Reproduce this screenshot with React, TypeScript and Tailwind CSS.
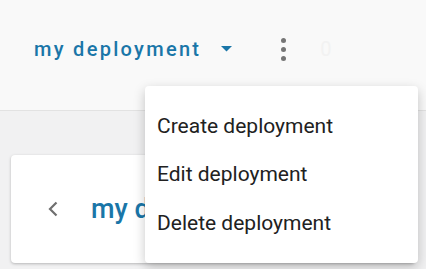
import React from 'react';

const menuItems = ['Create deployment', 'Edit deployment', 'Delete deployment'];

const App: React.FC = () => {
  return (
    <div
      className="relative w-[426px] h-[269px] overflow-hidden bg-[#f1f1f2]"
      style={{ fontFamily: 'Roboto, "Noto Sans", sans-serif' }}
    >
      {/* top bar */}
      <div className="h-[111px] bg-[#f9f9f9] border-b border-[#e2e2e2]">
        <div className="flex items-center h-[98px] pl-[34px]">
          <span className="text-[20px] font-medium tracking-[2.3px] text-[#1a76a8]">my deployment</span>
          <svg className="ml-[20px]" width="12" height="6" viewBox="0 0 12 6">
            <path d="M0 0h11L5.5 5.5z" fill="#1a76a8" />
          </svg>
          <div className="ml-[48px] flex flex-col gap-[4px]">
            <span className="w-[5px] h-[5px] rounded-full bg-[#757575]" />
            <span className="w-[5px] h-[5px] rounded-full bg-[#757575]" />
            <span className="w-[5px] h-[5px] rounded-full bg-[#757575]" />
          </div>
          <span className="ml-[34px] text-[20px] text-[#f2f2f2]">0</span>
        </div>
      </div>

      {/* card */}
      <div className="mx-[11px] mt-[44px] h-[108px] bg-white rounded-[4px] shadow-[0_1px_3px_rgba(0,0,0,0.25)] flex items-center pl-[35px]">
        <svg width="14" height="18" viewBox="0 0 14 18">
          <path d="M10.5 2.5L4 9l6.5 6.5" fill="none" stroke="#6f6f6f" strokeWidth="2.2" />
        </svg>
        <span className="ml-[31px] text-[27px] font-medium text-[#1a76a8]">my deployment</span>
      </div>

      {/* dropdown menu */}
      <div className="absolute left-[145px] top-[86px] w-[273px] h-[177px] bg-white rounded-[4px] shadow-[0_4px_12px_rgba(0,0,0,0.22)] pt-[16px]">
        {menuItems.map((item) => (
          <div key={item} className="h-[48.5px] flex items-center pl-[12px] text-[21px] text-[#212121]">
            {item}
          </div>
        ))}
      </div>
    </div>
  );
};

export default App;
